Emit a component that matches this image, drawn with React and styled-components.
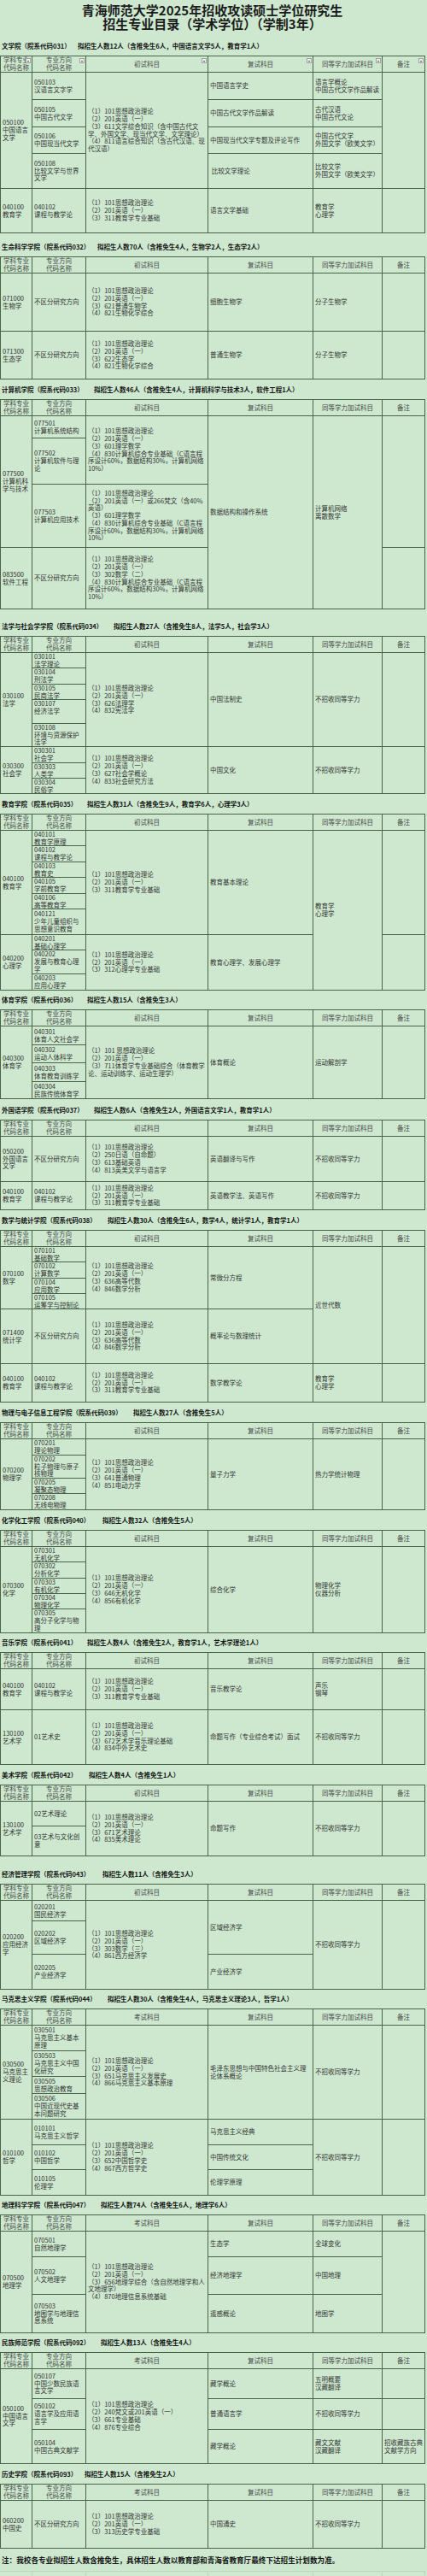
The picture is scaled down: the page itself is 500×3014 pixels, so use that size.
import React from 'react';
import styled, { createGlobalStyle } from 'styled-components';

const BG = '#cde8cf';
const LINE = '#476547';

const GlobalStyle = createGlobalStyle`
  html, body { margin: 0; padding: 0; background: ${BG}; }
  body { font-family: "Noto Sans CJK SC", "Noto Sans", sans-serif; color: #333; }
  * { box-sizing: border-box; }
`;

const Page = styled.div`
  width: 500px;
  min-height: 3014px;
  background: ${BG};
  font-family: "Noto Sans CJK SC", "Noto Sans", sans-serif;
`;

const Title = styled.h1`
  margin: 0;
  width: 497px;
  padding: 4px 0 7px;
  text-align: center;
  font-size: 15px;
  line-height: 16px;
  font-weight: 700;
  color: #1c1c1c;
`;

const SectionHead = styled.div`
  height: ${p => p.$h}px;
  display: flex;
  align-items: flex-end;
  padding: 0 0 5px 2px;
  font-size: 7.5px;
  line-height: 12px;
  font-weight: 700;
  color: #141414;
  white-space: nowrap;
`;

const HeadName = styled.span`
  display: inline-block;
  min-width: ${p => p.$w}px;
`;

const Grid = styled.div`
  display: grid;
  grid-template-columns: 37px 63px 143px 123px 81px 50px;
  grid-template-rows: ${p => p.$rows};
  width: 498px;
  border-top: 1px solid ${LINE};
  border-left: 1px solid ${LINE};
  font-size: 7.5px;
  line-height: 8.8px;
  color: #333;
`;

const HeadCell = styled.div`
  position: relative;
  border-right: 1px solid ${LINE};
  border-bottom: 1px solid ${LINE};
  padding: 0 1px;
  display: flex;
  flex-direction: column;
  justify-content: center;
  align-items: center;
  text-align: center;
  color: #474747;
`;

const FilterBtn = styled.span`
  position: absolute;
  top: 2px;
  right: 1px;
  width: 6px;
  height: 6px;
  background: #eef0ee;
  border: 1px solid #a2a2a2;
  &::after {
    content: '';
    position: absolute;
    left: 1px;
    top: 1.5px;
    border-left: 1.5px solid transparent;
    border-right: 1.5px solid transparent;
    border-top: 2px solid #444;
  }
`;

const Cell = styled.div`
  grid-row: span ${p => p.$rs || 1};
  border-right: 1px solid ${LINE};
  border-bottom: 1px solid ${LINE};
  padding: 0 1px 0 2px;
  display: flex;
  flex-direction: column;
  justify-content: ${p => (p.$top ? 'flex-start' : 'center')};
  min-width: 0;
  overflow-wrap: anywhere;
`;

const Line = styled.div``;

const Note = styled.p`
  margin: 0;
  height: 26px;
  padding: 7px 0 0 2px;
  font-size: 8.6px;
  line-height: 12px;
  font-weight: 700;
  color: #141414;
  white-space: nowrap;
`;

const GhostGrid = styled.div`
  display: grid;
  grid-template-columns: 37px 63px 143px 123px 81px 50px;
  width: 498px;
  height: 17px;
  padding-left: 1px;
  border-top: 1px solid #b9d6bc;
`;

const GhostCell = styled.div`
  border-right: 1px solid #b9d6bc;
`;

const E = (...items) => items.map((t, i) => `（${i + 1}）${t}`);
const C830 = '830计算机综合专业基础（C语言程序设计60%，数据结构30%，计算机网络10%）';
const EDU = E('101思想政治理论', '201英语（一）', '311教育学专业基础');
const MATH = E('101思想政治理论', '201英语（一）', '636高等代数', '846数学分析');

const c = (content, rs, top) => ({ content, rs, top });

const SECTIONS = [
  {
    name: '文学院（院系代码031）', w: 89, gap: 22, filter: true, exam: '初试科目',
    quota: '拟招生人数12人（含推免生6人，中国语言文学5人，教育学1人）',
    rows: [
      { h: 32, cells: [c(['050100', '中国语言文学'], 4), c(['050103', '汉语言文字学']), c(E('101思想政治理论', '201英语（一）', '611文学综合知识（含中国古代文学、外国文学、现当代文学、文学理论）', '811语言综合知识（含古代汉语、现代汉语）'), 4), c(['中国语言学史']), c(['语言学概论', '中国古代文学作品解读']), c('', 4)] },
      { h: 32, cells: [c(['050105', '中国古代文学']), c(['中国古代文学作品解读']), c(['古代汉语', '中国古代文论'])] },
      { h: 31, cells: [c(['050106', '中国现当代文学']), c(['中国现当代文学专题及评论写作']), c(['中国古代文学', '外国文学（欧美文学）'])] },
      { h: 41, cells: [c(['050108', '比较文学与世界文学']), c(['\u00a0比较文学理论']), c(['比较文学', '外国文学（欧美文学）'])] },
      { h: 52, cells: [c(['040100', '教育学']), c(['040102', '课程与教学论']), c(EDU), c(['语言文学基础']), c(['教育学', '心理学']), c('')] },
    ],
  },
  {
    name: '生命科学学院（院系代码032）', w: 112, gap: 27, exam: '初试科目',
    quota: '拟招生人数70人（含推免生4人，生物学2人，生态学2人）',
    rows: [
      { h: 68, cells: [c(['071000', '生物学']), c(['不区分研究方向']), c(E('101思想政治理论', '201英语（一）', '621普通生物学', '821生物化学综合')), c(['细胞生物学']), c(['分子生物学']), c('')] },
      { h: 56, cells: [c(['071300', '生态学']), c(['不区分研究方向']), c(E('101思想政治理论', '201英语（一）', '622生态学', '821生物化学综合')), c(['普通生物学']), c(['分子生物学']), c('')] },
    ],
  },
  {
    name: '计算机学院（院系代码033）', w: 108, gap: 23, exam: '初试科目',
    quota: '拟招生人数46人（含推免生4人，计算机科学与技术3人，软件工程1人）',
    rows: [
      { h: 26, cells: [c(['077500', '计算机科学与技术'], 3), c(['077501', '计算机系统结构']), c(E('101思想政治理论', '201英语（一）', '601理学数学', C830), 2), c(['数据结构和操作系统'], 4), c(['计算机网络', '离散数学'], 4), c('', 3)] },
      { h: 54, cells: [c(['077502', '计算机软件与理论'])] },
      { h: 74, cells: [c(['077503', '计算机应用技术']), c(E('101思想政治理论', '201英语（一）或266梵文（含40%英语）', '601理学数学', C830))] },
      { h: 72, cells: [c(['083500', '软件工程']), c(['不区分研究方向']), c(E('101思想政治理论', '201英语（一）', '302数学（二）', C830)), c('')] },
    ],
  },
  {
    name: '法学与社会学学院（院系代码034）', w: 131, gap: 31, exam: '初试科目',
    quota: '拟招生人数27人（含推免生8人，法学5人，社会学3人）',
    rows: [
      { h: 18, cells: [c(['030100', '法学'], 5), c(['030101', '法学理论']), c(E('101思想政治理论', '201英语（一）', '626法理学', '832宪法学'), 5), c(['中国法制史'], 5), c(['不招收同等学力'], 5), c('', 5)] },
      { h: 19, cells: [c(['030104', '刑法学'])] },
      { h: 18, cells: [c(['030105', '民商法学'])] },
      { h: 28, cells: [c(['030107', '经济法学'], 1, true)] },
      { h: 27, cells: [c(['030108', '环境与资源保护法学'])] },
      { h: 19, cells: [c(['030300', '社会学'], 3), c(['030301', '社会学']), c(E('101思想政治理论', '201英语（一）', '627社会学概论', '833社会研究方法'), 3), c(['中国文化'], 3), c(['不招收同等学力'], 3), c('', 3)] },
      { h: 18, cells: [c(['030303', '人类学'])] },
      { h: 18, cells: [c(['030304', '民俗学'])] },
    ],
  },
  {
    name: '教育学院（院系代码035）', w: 100, gap: 23, exam: '初试科目',
    quota: '拟招生人数31人（含推免生9人，教育学6人，心理学3人）',
    rows: [
      { h: 18, cells: [c(['040100', '教育学'], 6), c(['040101', '教育学原理']), c(EDU, 6), c(['教育基本理论'], 6), c(['教育学', '心理学'], 9), c('', 6)] },
      { h: 19, cells: [c(['040102', '课程与教学论'])] },
      { h: 18, cells: [c(['040103', '教育史'])] },
      { h: 19, cells: [c(['040105', '学前教育学'])] },
      { h: 18, cells: [c(['040106', '高等教育学'])] },
      { h: 30, cells: [c(['040121', '少年儿童组织与思想意识教育'])] },
      { h: 18, cells: [c(['040200', '心理学'], 3), c(['040201', '基础心理学']), c(E('101思想政治理论', '201英语（一）', '312心理学专业基础'), 3), c(['教育心理学、发展心理学'], 3), c('', 3)] },
      { h: 28, cells: [c(['040202', '发展与教育心理学'])] },
      { h: 19, cells: [c(['040203', '应用心理学'])] },
    ],
  },
  {
    name: '体育学院（院系代码036）', w: 100, gap: 22, exam: '初试科目',
    quota: '拟招生人数15人（含推免生3人）',
    rows: [
      { h: 22, cells: [c(['040300', '体育学'], 4), c(['040301', '体育人文社会学']), c(E('101 思想政治理论', '201英语（一）', '711体育学专业基础综合（体育教学论、运动训练学、运动生理学）'), 4), c(['体育概论'], 4), c(['运动解剖学'], 4), c('', 4)] },
      { h: 21, cells: [c(['040302', '运动人体科学'])] },
      { h: 22, cells: [c(['040303', '体育教育训练学'])] },
      { h: 20, cells: [c(['040304', '民族传统体育学'])] },
    ],
  },
  {
    name: '外国语学院（院系代码037）', w: 108, gap: 24, exam: '初试科目',
    quota: '拟招生人数6人（含推免生2人，外国语言文学1人，教育学1人）',
    rows: [
      { h: 53, cells: [c(['050200', '外国语言文学']), c(['不区分研究方向']), c(E('101思想政治理论', '250日语（自命题）', '613基础英语', '813英美文学与语言学')), c(['英语翻译与写作']), c(['不招收同等学力']), c('')] },
      { h: 33, cells: [c(['040100', '教育学']), c(['040102', '课程与教学论']), c(EDU), c(['英语教学法、英语写作']), c(['不招收同等学力']), c('')] },
    ],
  },
  {
    name: '数学与统计学院（院系代码038）', w: 124, gap: 23, exam: '初试科目',
    quota: '拟招生人数30人（含推免生6人，数学4人，统计学1人，教育学1人）',
    rows: [
      { h: 18, cells: [c(['070100', '数学'], 4), c(['070101', '基础数学']), c(MATH, 4), c(['常微分方程'], 4), c(['近世代数'], 5), c('', 5)] },
      { h: 19, cells: [c(['070102', '计算数学'])] },
      { h: 18, cells: [c(['070104', '应用数学'])] },
      { h: 18, cells: [c(['070105', '运筹学与控制论'])] },
      { h: 64, cells: [c(['071400', '统计学']), c(['不区分研究方向']), c(MATH), c(['概率论与数理统计'])] },
      { h: 45, cells: [c(['040100', '教育学']), c(['040102', '课程与教学论']), c(EDU), c(['数学教学论']), c(['教育学', '心理学']), c('')] },
    ],
  },
  {
    name: '物理与电子信息工程学院（院系代码039）', w: 154, gap: 23, exam: '初试科目',
    quota: '拟招生人数27人（含推免生5人）',
    rows: [
      { h: 19, cells: [c(['070200', '物理学'], 4), c(['070201', '理论物理']), c(E('101思想政治理论', '201英语（一）', '641普通物理', '851电动力学'), 4), c(['量子力学'], 4), c(['热力学统计物理'], 4), c('', 4)] },
      { h: 27, cells: [c(['070202', '粒子物理与原子核物理'])] },
      { h: 18, cells: [c(['070205', '凝聚态物理'])] },
      { h: 19, cells: [c(['070208', '无线电物理'])] },
    ],
  },
  {
    name: '化学化工学院（院系代码040）', w: 118, gap: 23, exam: '初试科目',
    quota: '拟招生人数32人（含推免生5人）',
    rows: [
      { h: 18, cells: [c(['070300', '化学'], 5), c(['070301', '无机化学']), c(E('101思想政治理论', '201英语（一）', '646无机化学', '856有机化学'), 5), c(['综合化学'], 5), c(['物理化学', '仪器分析'], 5), c('', 5)] },
      { h: 19, cells: [c(['070302', '分析化学'])] },
      { h: 18, cells: [c(['070303', '有机化学'])] },
      { h: 18, cells: [c(['070304', '物理化学'])] },
      { h: 28, cells: [c(['070305', '高分子化学与物理'])] },
    ],
  },
  {
    name: '音乐学院（院系代码041）', w: 100, gap: 22, exam: '初试科目',
    quota: '拟招生人数4人（含推免生2人，教育学1人，艺术学理论1人）',
    rows: [
      { h: 48, cells: [c(['040100', '教育学']), c(['040102', '课程与教学论']), c(EDU), c(['音乐教学论']), c(['声乐', '钢琴']), c('')] },
      { h: 64, cells: [c(['130100', '艺术学']), c(['01艺术史']), c(E('101思想政治理论', '201英语（一）', '672艺术学音乐理论基础', '834中外艺术史')), c(['命题写作（专业综合考试）面试']), c(['不招收同等学力']), c('')] },
    ],
  },
  {
    name: '美术学院（院系代码042）', w: 102, gap: 23, exam: '初试科目',
    quota: '拟招生人数4人（含推免生1人）',
    rows: [
      { h: 29, cells: [c(['130100', '艺术学'], 2), c(['02艺术理论']), c(E('101思想政治理论', '201英语（一）', '671艺术理论', '835美术理论'), 2), c(['命题写作'], 2), c(['不招收同等学力'], 2), c('', 2)] },
      { h: 35, cells: [c(['03艺术与文化创意'])] },
    ],
  },
  {
    name: '经济管理学院（院系代码043）', w: 118, gap: 32, exam: '初试科目',
    quota: '拟招生人数11人（含推免生3人）',
    rows: [
      { h: 24, cells: [c(['020200', '应用经济学'], 3), c(['020201', '国民经济学']), c(E('101思想政治理论', '201英语（一）', '303数学（三）', '861西方经济学'), 3), c(['区域经济学'], 2), c(['不招收同等学力'], 3), c('', 3)] },
      { h: 39, cells: [c(['020202', '区域经济学'])] },
      { h: 41, cells: [c(['020205', '产业经济学']), c(['产业经济学'])] },
    ],
  },
  {
    name: '马克思主义学院（院系代码044）', w: 124, gap: 22, exam: '考试科目',
    quota: '拟招生人数30人（含推免生4人，马克思主义理论3人，哲学1人）',
    rows: [
      { h: 30, cells: [c(['030500', '马克思主义理论'], 4), c(['030501', '马克思主义基本原理']), c(E('101思想政治理论', '201英语（一）', '651马克思主义发展史', '866马克思主义基本原理'), 4), c(['毛泽东思想与中国特色社会主义理论体系概论'], 4), c(['不招收同等学力'], 4), c('', 4)] },
      { h: 30, cells: [c(['030503', '马克思主义中国化研究'])] },
      { h: 20, cells: [c(['030505', '思想政治教育'])] },
      { h: 30, cells: [c(['030506', '中国近现代史基本问题研究'])] },
      { h: 30, cells: [c(['010100', '哲学'], 3), c(['010101', '马克思主义哲学']), c(E('101思想政治理论', '201英语（一）', '652中国哲学史', '867西方哲学史'), 3), c(['马克思主义经典']), c(['不招收同等学力'], 3), c('', 3)] },
      { h: 29, cells: [c(['010102', '中国哲学']), c(['中国传统文化'])] },
      { h: 30, cells: [c(['010105', '伦理学']), c(['伦理学原理'])] },
    ],
  },
  {
    name: '地理科学学院（院系代码047）', w: 116, gap: 22, exam: '考试科目',
    quota: '拟招生人数74人（含推免生6人，地理学6人）',
    rows: [
      { h: 30, cells: [c(['070500', '地理学'], 3), c(['070501', '自然地理学']), c(E('101思想政治理论', '201英语（一）', '656地理学综合（含自然地理学和人文地理学）', '870地理信息系统基础'), 3), c(['生态学']), c(['全球变化']), c('', 3)] },
      { h: 44, cells: [c(['070502', '人文地理学']), c(['经济地理学']), c(['中国地理'])] },
      { h: 45, cells: [c(['070503', '地图学与地理信息系统']), c(['遥感概论']), c(['地图学'])] },
    ],
  },
  {
    name: '民族师范学院（院系代码092）', w: 116, gap: 22, exam: '考试科目',
    quota: '拟招生人数13人（含推免生4人）',
    rows: [
      { h: 35, cells: [c(['050100', '中国语言文学'], 3), c(['050107', '中国少数民族语言文学']), c(E('101思想政治理论', '240梵文或201英语（一）', '661专业基础', '876专业综合'), 3), c(['藏学概论']), c(['五明概要', '汉藏翻译']), c('')] },
      { h: 36, cells: [c(['050102', '语言学及应用语言学']), c(['普通语言学']), c(['不招收同等学力']), c('')] },
      { h: 40, cells: [c(['050104', '中国古典文献学']), c(['藏学概论']), c(['藏文文献', '汉藏翻译']), c(['招收藏族古典文献学方向'])] },
    ],
  },
  {
    name: '历史学院（院系代码093）', w: 97, gap: 23, exam: '考试科目',
    quota: '拟招生人数15人（含推免生2人）',
    rows: [
      { h: 56, cells: [c(['060200', '中国史']), c(['不区分研究方向']), c(E('101思想政治理论', '201英语（一）', '313历史学专业基础')), c(['中国通史']), c(['不招收同等学力']), c('')] },
    ],
  },
];

function Section({ s }) {
  const heads = [['学科专业', '代码名称'], ['专业方向', '代码名称'], [s.exam], ['复试科目'], ['同等学力加试科目'], ['备注']];
  const rows = ['19px', ...s.rows.map(r => `${r.h}px`)].join(' ');
  return (
    <>
      <SectionHead $h={s.gap}>
        <HeadName $w={s.w}>{s.name}</HeadName>
        <span>{s.quota}</span>
      </SectionHead>
      <Grid $rows={rows}>
        {heads.map((h, i) => (
          <HeadCell key={`h${i}`}>
            {h.map((t, j) => <Line key={j}>{t}</Line>)}
            {s.filter && <FilterBtn />}
          </HeadCell>
        ))}
        {s.rows.map((r, i) =>
          r.cells.map((cell, j) => (
            <Cell key={`${i}-${j}`} $rs={cell.rs} $top={cell.top}>
              {cell.content && cell.content.map((t, k) => <Line key={k}>{t}</Line>)}
            </Cell>
          ))
        )}
      </Grid>
    </>
  );
}

export default function App() {
  return (
    <Page>
      <GlobalStyle />
      <Title>
        <div>青海师范大学2025年招收攻读硕士学位研究生</div>
        <div>招生专业目录（学术学位）（学制3年）</div>
      </Title>
      {SECTIONS.map((s, i) => <Section key={i} s={s} />)}
      <Note>注：我校各专业拟招生人数含推免生，具体招生人数以教育部和青海省教育厅最终下达招生计划数为准。</Note>
      <GhostGrid>
        {[0, 1, 2, 3, 4, 5].map(i => <GhostCell key={i} />)}
      </GhostGrid>
    </Page>
  );
}
